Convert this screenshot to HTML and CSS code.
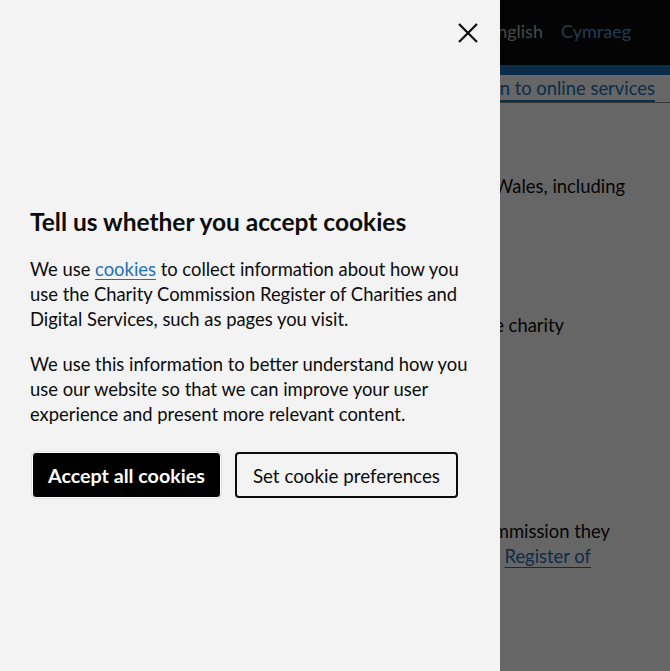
FILE: index.html
```
<!DOCTYPE html>
<html lang="en">
<head>
<meta charset="utf-8">
<title>Register of Charities</title>
<link rel="stylesheet" href="styles.css">
</head>
<body>
<div class="page">
  <header class="site-header">
    <nav class="lang">
      <a class="lang-link lang-current" href="#">English</a>
      <a class="lang-link" href="#">Cymraeg</a>
    </nav>
  </header>
  <div class="blue-bar"></div>
  <div class="signin-row">
    <a class="signin" href="#">Sign in to online services</a>
  </div>
  <main class="content">
    <p class="line l1">The register of charities in England and Wales, including</p>
    <p class="line l2">You can search for a charity by name or the charity</p>
    <p class="line l3">If you are a charity registered with the Charity Commission they</p>
    <p class="line l4">must keep their details up to date on the <a href="#" class="reg">Register of</a></p>
  </main>
</div>
<div class="overlay"></div>
<div class="cookie-panel" role="dialog" aria-labelledby="cookie-title">
  <button class="close" aria-label="Close">
    <svg width="22" height="22" viewBox="0 0 22 22"><path d="M2 2 L20 20 M20 2 L2 20" stroke="#0b0c0c" stroke-width="2.2" fill="none"/></svg>
  </button>
  <div class="cookie-body">
    <h2 id="cookie-title" class="cookie-title">Tell us whether you accept cookies</h2>
    <p class="cookie-text">We use <a href="#" class="cookie-link">cookies</a> to collect information about how you use the Charity Commission Register of Charities and Digital Services, such as pages you visit.</p>
    <p class="cookie-text">We use this information to better understand how you use our website so that we can improve your user experience and present more relevant content.</p>
    <div class="actions">
      <button class="btn btn-accept">Accept all cookies</button>
      <button class="btn btn-prefs">Set cookie preferences</button>
    </div>
  </div>
</div>
</body>
</html>
```

FILE: styles.css
```
* { box-sizing: border-box; }
html, body { margin: 0; padding: 0; }
body {
  font-family: Lato, "Liberation Sans", Arial, sans-serif;
  color: #0b0c0c;
  background: #ffffff;
  width: 670px;
  height: 671px;
  overflow: hidden;
}
.page { width: 670px; }
.site-header {
  background: #0b0c0c;
  height: 65px;
  display: flex;
  justify-content: flex-end;
  align-items: flex-start;
  padding: 18px 39px 0 0;
}
.lang { display: flex; gap: 18px; }
.lang-link {
  font-size: 18px;
  line-height: 26px;
  text-decoration: none;
  color: #5694ca;
}
.lang-current { color: #b1b4b6; }
.blue-bar { height: 10px; background: #1d70b8; }
.signin-row {
  display: flex;
  justify-content: flex-end;
  padding: 0 15px 0 0;
  height: 28px;
  border-bottom: 1px solid #8a8a8a;
}
.signin {
  font-size: 18.4px;
  line-height: 26px;
  color: #1d70b8;
  text-decoration: underline;
  text-decoration-thickness: 2px;
  text-underline-offset: 5px;
}
.content { padding-top: 71px; }
.line {
  margin: 0;
  font-size: 18.4px;
  line-height: 25px;
  white-space: nowrap;
  text-align: right;
}
.l1 { padding-right: 45px; }
.l2 { margin-top: 114px; padding-right: 106px; }
.l3 { margin-top: 181px; padding-right: 60px; }
.l4 { padding-right: 79px; }
.reg { color: #1d70b8; text-underline-offset: 4px; }
.overlay {
  position: fixed;
  inset: 0;
  background: rgba(0, 0, 0, 0.6);
}
.cookie-panel {
  position: fixed;
  top: 0;
  left: 0;
  bottom: 0;
  width: 500px;
  background: #f3f3f3;
  display: flex;
  flex-direction: column;
}
.close {
  position: absolute;
  top: 22px;
  left: 457px;
  width: 22px;
  height: 22px;
  border: 0;
  padding: 0;
  background: transparent;
}
.close svg { display: block; }
.cookie-body { padding: 205px 30px 0 30px; }
.cookie-title {
  margin: 0 0 18px;
  font-size: 24.5px;
  line-height: 34px;
  font-weight: 700;
}
.cookie-text {
  margin: 0 0 20px;
  font-size: 18.4px;
  line-height: 25px;
}
.cookie-link { color: #1d70b8; text-underline-offset: 3px; }
.actions {
  display: flex;
  gap: 14px;
  margin-top: 25px;
}
.btn {
  font-family: inherit;
  height: 46px;
  border-radius: 4px;
}
.btn-accept {
  background: #000;
  color: #fff;
  font-size: 19.7px;
  font-weight: 700;
  border: 1px solid #fff;
  box-shadow: 0 0 0 1px #e0e0e0;
  margin-left: 2px;
  padding: 0 15px;
}
.btn-prefs {
  background: transparent;
  color: #0b0c0c;
  font-size: 18.8px;
  border: 2px solid #0b0c0c;
  padding: 0 16px;
}
```
